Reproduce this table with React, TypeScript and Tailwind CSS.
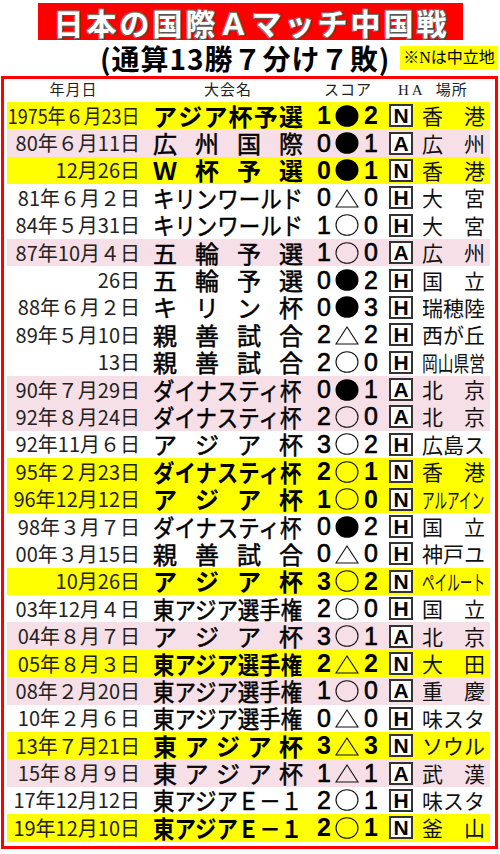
import React from "react";

type Row = {
  d: string;
  dScale?: boolean;
  t: string;
  s: [string, "b" | "w" | "t", string];
  ha: string;
  p: string;
  bg: "y" | "p" | "w";
};

const rows: Row[] = [
  { d: "1975年６月23日", dScale: true, t: "アジア杯予選", s: ["1", "b", "2"], ha: "N", p: "香港", bg: "y" },
  { d: "80年６月11日", t: "広州国際", s: ["0", "b", "1"], ha: "A", p: "広州", bg: "p" },
  { d: "12月26日", t: "Ｗ杯予選", s: ["0", "b", "1"], ha: "N", p: "香港", bg: "y" },
  { d: "81年６月２日", t: "キリンワールド", s: ["0", "t", "0"], ha: "H", p: "大宮", bg: "w" },
  { d: "84年５月31日", t: "キリンワールド", s: ["1", "w", "0"], ha: "H", p: "大宮", bg: "w" },
  { d: "87年10月４日", t: "五輪予選", s: ["1", "w", "0"], ha: "A", p: "広州", bg: "p" },
  { d: "26日", t: "五輪予選", s: ["0", "b", "2"], ha: "H", p: "国立", bg: "w" },
  { d: "88年６月２日", t: "キリン杯", s: ["0", "b", "3"], ha: "H", p: "瑞穂陸", bg: "w" },
  { d: "89年５月10日", t: "親善試合", s: ["2", "t", "2"], ha: "H", p: "西が丘", bg: "w" },
  { d: "13日", t: "親善試合", s: ["2", "w", "0"], ha: "H", p: "岡山県営", bg: "w" },
  { d: "90年７月29日", t: "ダイナスティ杯", s: ["0", "b", "1"], ha: "A", p: "北京", bg: "p" },
  { d: "92年８月24日", t: "ダイナスティ杯", s: ["2", "w", "0"], ha: "A", p: "北京", bg: "p" },
  { d: "92年11月６日", t: "アジア杯", s: ["3", "w", "2"], ha: "H", p: "広島ス", bg: "w" },
  { d: "95年２月23日", t: "ダイナスティ杯", s: ["2", "w", "1"], ha: "N", p: "香港", bg: "y" },
  { d: "96年12月12日", t: "アジア杯", s: ["1", "w", "0"], ha: "N", p: "アルアイン", bg: "y" },
  { d: "98年３月７日", t: "ダイナスティ杯", s: ["0", "b", "2"], ha: "H", p: "国立", bg: "w" },
  { d: "00年３月15日", t: "親善試合", s: ["0", "t", "0"], ha: "H", p: "神戸ユ", bg: "w" },
  { d: "10月26日", t: "アジア杯", s: ["3", "w", "2"], ha: "N", p: "ペイルート", bg: "y" },
  { d: "03年12月４日", t: "東アジア選手権", s: ["2", "w", "0"], ha: "H", p: "国立", bg: "w" },
  { d: "04年８月７日", t: "アジア杯", s: ["3", "w", "1"], ha: "A", p: "北京", bg: "p" },
  { d: "05年８月３日", t: "東アジア選手権", s: ["2", "t", "2"], ha: "N", p: "大田", bg: "y" },
  { d: "08年２月20日", t: "東アジア選手権", s: ["1", "w", "0"], ha: "A", p: "重慶", bg: "p" },
  { d: "10年２月６日", t: "東アジア選手権", s: ["0", "t", "0"], ha: "H", p: "味スタ", bg: "w" },
  { d: "13年７月21日", t: "東アジア杯", s: ["3", "t", "3"], ha: "N", p: "ソウル", bg: "y" },
  { d: "15年８月９日", t: "東アジア杯", s: ["1", "t", "1"], ha: "A", p: "武漢", bg: "p" },
  { d: "17年12月12日", t: "東アジアＥ－１", s: ["2", "w", "1"], ha: "H", p: "味スタ", bg: "w" },
  { d: "19年12月10日", t: "東アジアＥ－１", s: ["2", "w", "1"], ha: "N", p: "釜山", bg: "y" },
];

const bgClass: Record<Row["bg"], string> = {
  y: "bg-[#ffff00]",
  p: "bg-[#f6dfe6]",
  w: "bg-white",
};

function Sym({ k }: { k: "b" | "w" | "t" }) {
  if (k === "b")
    return (
      <svg width="24" height="24" viewBox="0 0 24 24">
        <ellipse cx="12" cy="12" rx="11.5" ry="10.8" fill="#000" />
      </svg>
    );
  if (k === "w")
    return (
      <svg width="24" height="24" viewBox="0 0 24 24">
        <ellipse cx="12" cy="12" rx="11" ry="10.3" fill="none" stroke="#111" strokeWidth="1.1" />
      </svg>
    );
  return (
    <svg width="24" height="24" viewBox="0 0 24 24">
      <polygon points="12,4 23,21 1,21" fill="none" stroke="#111" strokeWidth="1.1" />
    </svg>
  );
}

function Name({ t, bold }: { t: string; bold: boolean }) {
  const chars = Array.from(t);
  const w = bold ? "font-bold" : "font-normal [-webkit-text-stroke:0.5px_#000]";
  if (chars.length >= 7) {
    return (
      <div className={`w-[150px] shrink-0 text-[24px] leading-none whitespace-nowrap text-black ${w}`}>
        <span className="inline-block origin-left scale-x-[0.893]">{t}</span>
      </div>
    );
  }
  return (
    <div className={`w-[150px] shrink-0 flex justify-between text-[24px] leading-none text-black ${w}`}>
      {chars.map((c, i) => (
        <span key={i}>{c}</span>
      ))}
    </div>
  );
}

function Place({ p }: { p: string }) {
  const chars = Array.from(p);
  if (chars.length === 2) {
    return (
      <div className="w-[63px] shrink-0 flex justify-between text-[21px] leading-none text-[#111]">
        <span>{chars[0]}</span>
        <span>{chars[1]}</span>
      </div>
    );
  }
  if (chars.length === 3) {
    return <div className="w-[63px] shrink-0 text-[21px] leading-none whitespace-nowrap text-[#111]">{p}</div>;
  }
  const scale = chars.length === 4 ? "scale-x-[0.75]" : "scale-x-[0.6]";
  return (
    <div className="w-[63px] shrink-0 text-[21px] leading-none whitespace-nowrap text-[#111]">
      <span className={`inline-block origin-left ${scale}`}>{p}</span>
    </div>
  );
}

function TableRow({ r }: { r: Row }) {
  const bold = r.bg === "y";
  const w = bold ? "font-bold" : "font-normal [-webkit-text-stroke:0.6px_#000]";
  return (
    <div className={`flex items-center h-[27.4px] ${bgClass[r.bg]}`}>
      <div className="w-[133px] shrink-0 flex justify-end text-[20px] leading-none whitespace-nowrap text-[#222]">
        {r.dScale ? <span className="inline-block origin-right scale-x-[0.9]">{r.d}</span> : <span>{r.d}</span>}
      </div>
      <div className="ml-[13px] flex">
        <Name t={r.t} bold={bold} />
      </div>
      <div className={`ml-[12px] flex items-center shrink-0 text-[25px] leading-none text-black font-['Liberation_Sans',sans-serif] ${w}`}>
        <span className="w-[18px] flex justify-center">{r.s[0]}</span>
        <span className="w-[28px] flex justify-center">
          <Sym k={r.s[1]} />
        </span>
        <span className="w-[20px] flex justify-center">{r.s[2]}</span>
      </div>
      <div className="ml-[8px] w-[24px] h-[23px] shrink-0 border-2 border-[#333] bg-white flex items-center justify-center font-['Liberation_Sans',sans-serif] font-bold text-[21px] leading-none text-black">
        {r.ha}
      </div>
      <div className="ml-[9px] flex">
        <Place p={r.p} />
      </div>
    </div>
  );
}

export default function App() {
  return (
    <div className="w-[500px] h-[854px] bg-white font-['Noto_Sans_CJK_JP',sans-serif] overflow-hidden">
      <div className="flex justify-center pt-[3px]">
        <div className="w-[425px] h-[37px] bg-[#ff0000] flex items-center justify-center">
          <span className="text-white font-bold text-[30px] leading-none tracking-[3px] pl-[3px] [text-shadow:1px_1px_0_#555,-1px_-1px_0_#777,1px_-1px_0_#777,-1px_1px_0_#777]">
            日本の国際Ａマッチ中国戦
          </span>
        </div>
      </div>
      <div className="h-[36px] flex items-center">
        <div className="ml-[100px] text-[28px] font-bold leading-none tracking-[1px] text-black whitespace-nowrap">
          (通算13勝７分け７敗)
        </div>
        <div className="ml-[10px] h-[24px] px-[3px] bg-[#ffff00] flex items-center text-[16px] leading-none text-black whitespace-nowrap font-['Liberation_Serif','Noto_Sans_CJK_JP',serif]">
          ※Nは中立地
        </div>
      </div>
      <div className="ml-[1px] w-[497px] border-[3px] border-[#ff0000] pl-[3px] pr-[5px] pb-[4px]">
        <div className="flex items-center h-[23px] text-[15px] leading-none text-[#222] font-['Liberation_Serif','Noto_Sans_CJK_JP',serif]">
          <div className="w-[133px] shrink-0 text-center tracking-[1px]">年月日</div>
          <div className="ml-[13px] w-[150px] shrink-0 text-center tracking-[1px]">大会名</div>
          <div className="ml-[12px] w-[66px] shrink-0 text-center tracking-[1px]">スコア</div>
          <div className="ml-[17px] flex items-center whitespace-nowrap">
            <span className="tracking-[3px]">HA</span>
            <span className="ml-[10px] tracking-[1px]">場所</span>
          </div>
        </div>
        {rows.map((r, i) => (
          <TableRow key={i} r={r} />
        ))}
      </div>
    </div>
  );
}
